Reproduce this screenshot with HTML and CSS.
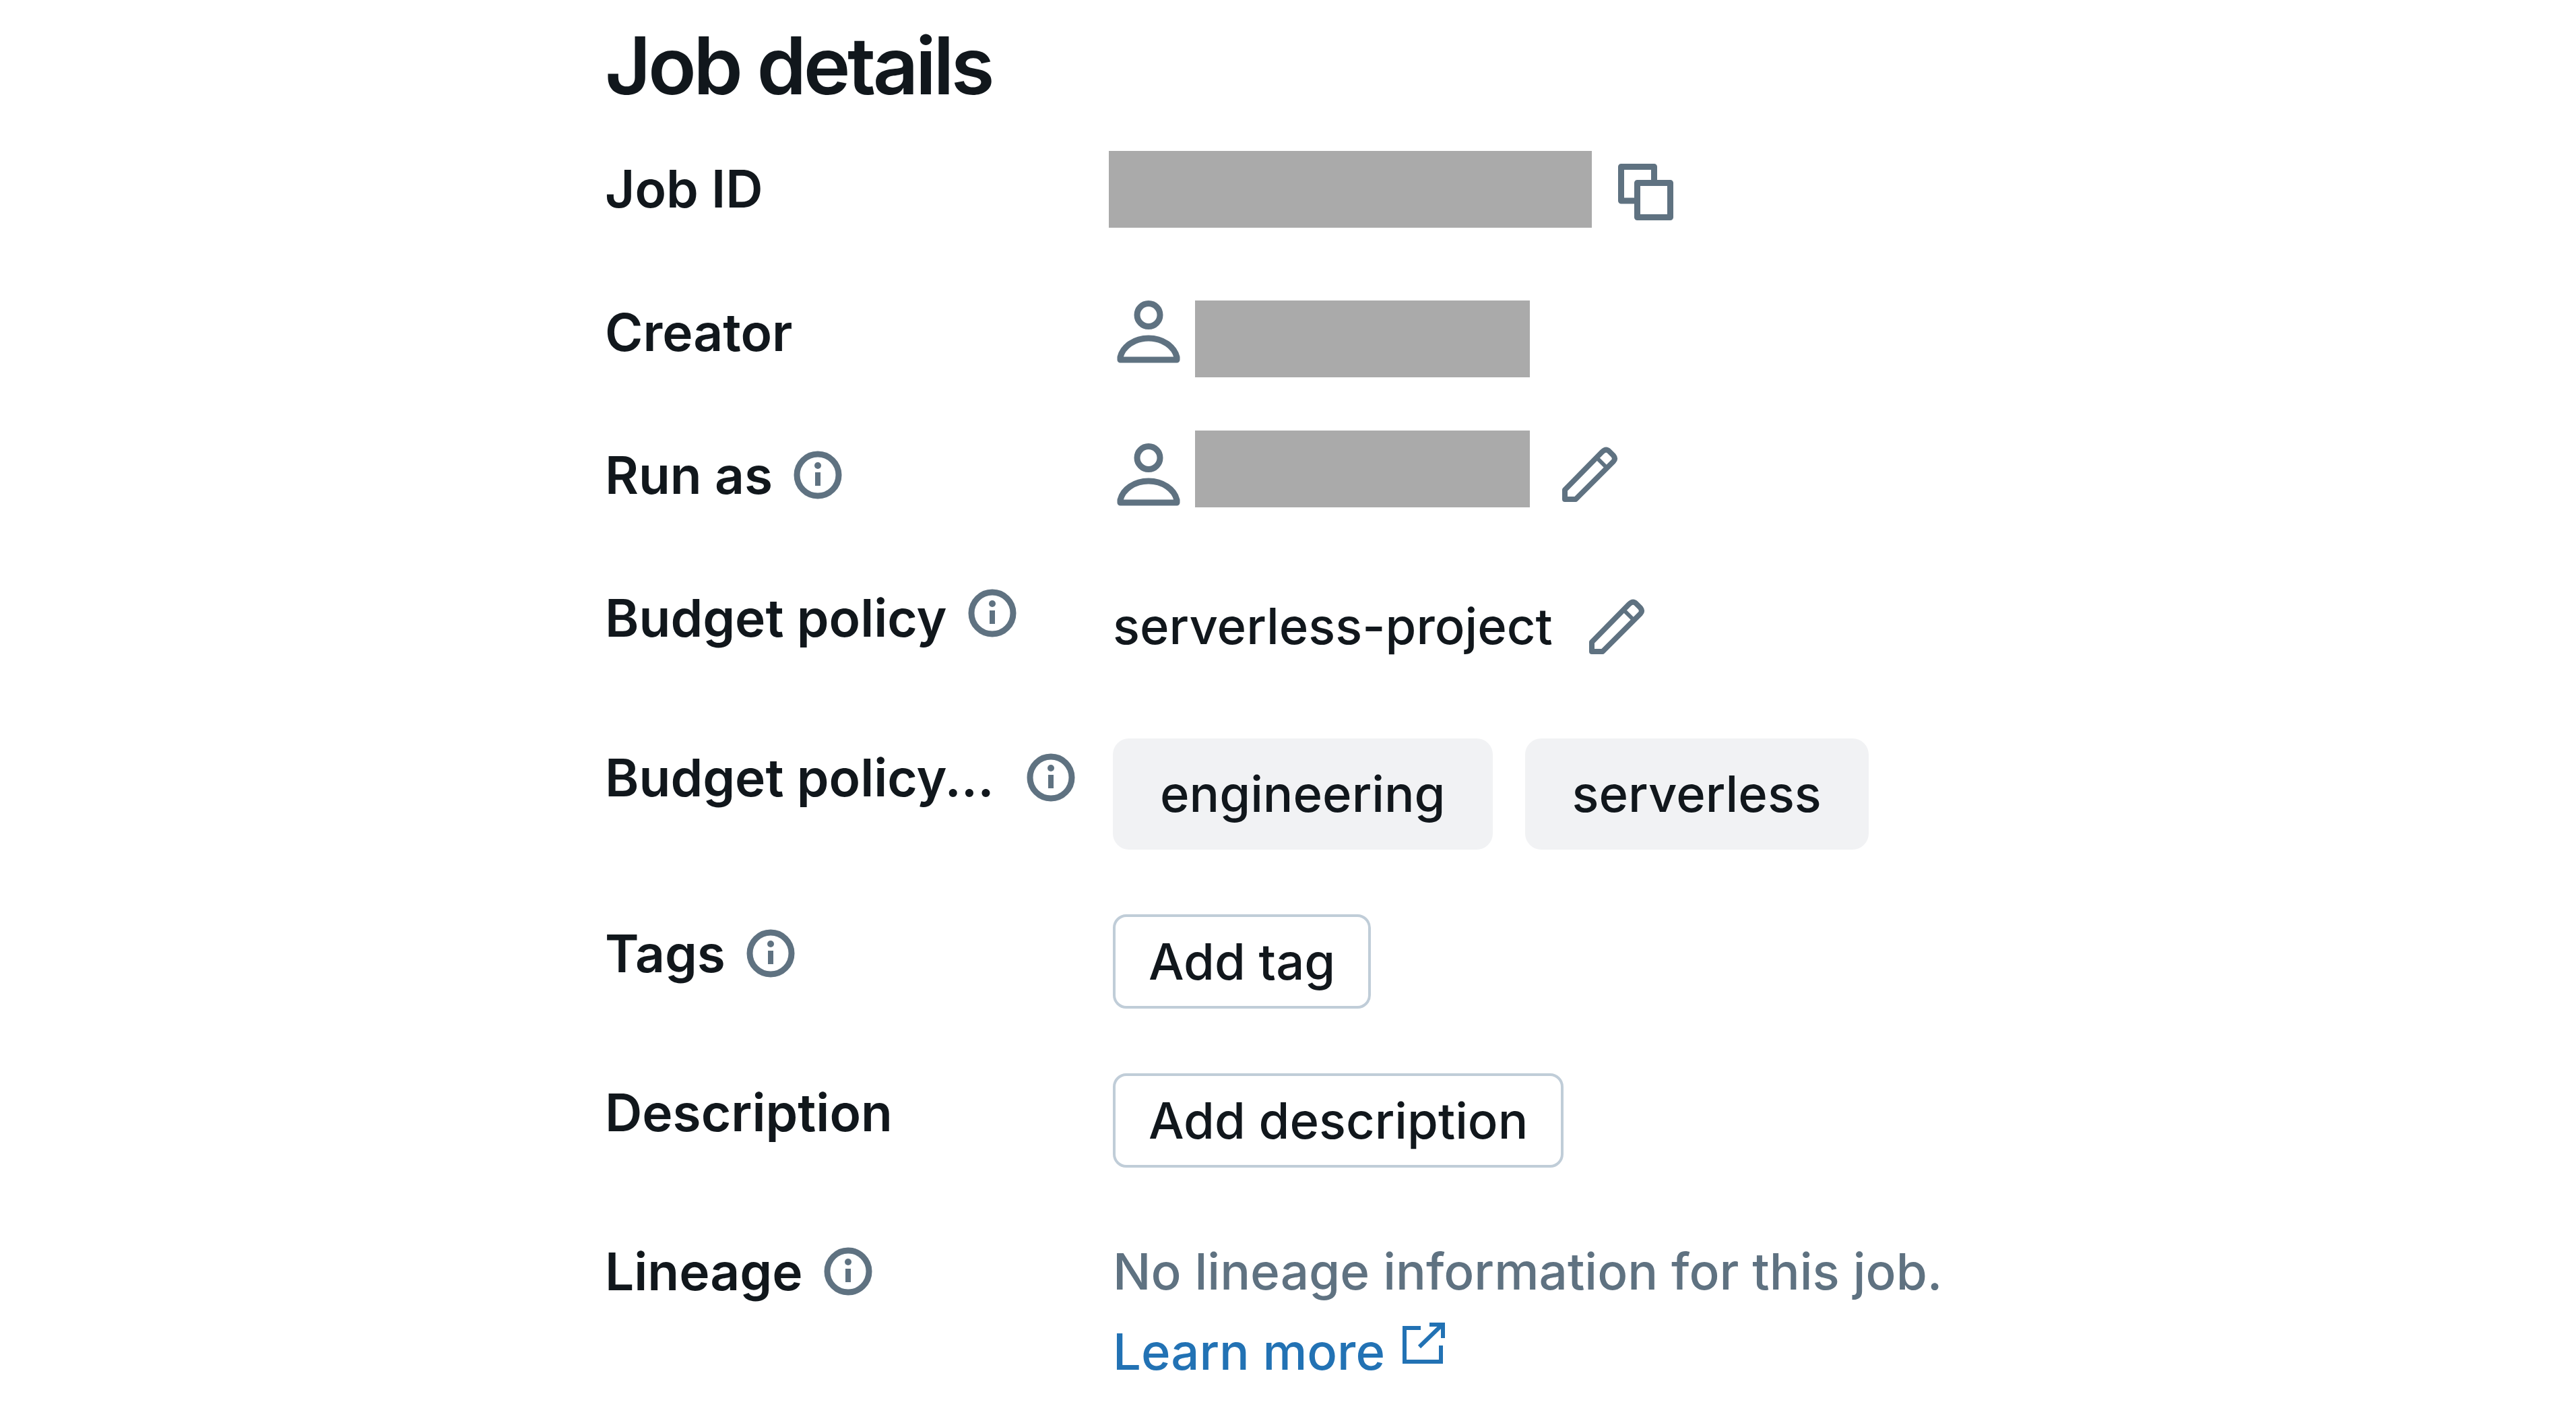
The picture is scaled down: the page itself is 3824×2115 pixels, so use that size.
FILE: index.html
```html
<!DOCTYPE html>
<html lang="en">
<head>
    <meta charset="UTF-8">
    <title>Job details</title>
    <link rel="stylesheet" href="styles.css">
</head>
<body>
    <svg class="defs" width="0" height="0">
        <symbol id="info" viewBox="0 0 72 72">
            <circle cx="36" cy="36" r="31" fill="none" stroke="currentColor" stroke-width="9"/>
            <circle cx="36" cy="22" r="5" fill="currentColor"/>
            <path d="M36 32V52" fill="none" stroke="currentColor" stroke-width="8"/>
        </symbol>
        <symbol id="person" viewBox="0 0 94 93">
            <circle cx="47" cy="21.5" r="17" fill="none" stroke="currentColor" stroke-width="9"/>
            <path d="M5 88V84C9 68 26 56 47 56C68 56 85 68 89 84V88Z" fill="none" stroke="currentColor" stroke-width="9" stroke-linejoin="round"/>
        </symbol>
        <symbol id="pencil" viewBox="0 0 84 84">
            <path d="M5 79V65L60 9Q66 3 71 8L77 14Q81 19 77 23L21 79Z" fill="none" stroke="currentColor" stroke-width="8" stroke-linejoin="round"/>
            <path d="M52 17L67 32" fill="none" stroke="currentColor" stroke-width="6"/>
        </symbol>
        <symbol id="copy" viewBox="0 0 82 84">
            <path d="M24 55H4.500V4.500H53.500V24" fill="none" stroke="currentColor" stroke-width="9" stroke-linejoin="round"/>
            <rect x="28.500" y="28.500" width="49" height="51" fill="none" stroke="currentColor" stroke-width="9" stroke-linejoin="round"/>
        </symbol>
        <symbol id="external" viewBox="0 0 64 62">
            <path d="M28 8H4V58H58V34" fill="none" stroke="currentColor" stroke-width="6"/>
            <path d="M26 36L59 4M41 3H61V23" fill="none" stroke="currentColor" stroke-width="6"/>
        </symbol>
    </svg>

    <div class="details">
        <h1>Job details</h1>

        <div class="row row-id">
            <div class="label">Job ID</div>
            <div class="value">
                <div class="redacted redacted-wide"></div>
                <svg class="icon icon-copy"><use href="#copy"/></svg>
            </div>
        </div>

        <div class="row row-person">
            <div class="label">Creator</div>
            <div class="value value-creator">
                <svg class="icon icon-person"><use href="#person"/></svg>
                <div class="redacted"></div>
            </div>
        </div>

        <div class="row row-person">
            <div class="label">Run as <svg class="icon icon-info"><use href="#info"/></svg></div>
            <div class="value value-runas">
                <svg class="icon icon-person"><use href="#person"/></svg>
                <div class="redacted"></div>
                <svg class="icon icon-pencil icon-pencil-raised"><use href="#pencil"/></svg>
            </div>
        </div>

        <div class="row">
            <div class="label">Budget policy <svg class="icon icon-info icon-info-raised"><use href="#info"/></svg></div>
            <div class="value value-text">
                <span>serverless-project</span>
                <svg class="icon icon-pencil icon-pencil-text"><use href="#pencil"/></svg>
            </div>
        </div>

        <div class="row">
            <div class="label label-chips">Budget policy... <svg class="icon icon-info icon-info-wide"><use href="#info"/></svg></div>
            <div class="value chips">
                <span class="chip">engineering</span>
                <span class="chip">serverless</span>
            </div>
        </div>

        <div class="row">
            <div class="label">Tags <svg class="icon icon-info"><use href="#info"/></svg></div>
            <div class="value"><button class="btn">Add tag</button></div>
        </div>

        <div class="row">
            <div class="label">Description</div>
            <div class="value"><button class="btn">Add description</button></div>
        </div>

        <div class="row row-last">
            <div class="label">Lineage <svg class="icon icon-info"><use href="#info"/></svg></div>
            <div class="lineage">
                <div class="muted">No lineage information for this job.</div>
                <a class="link" href="#">Learn more <svg class="icon icon-external"><use href="#external"/></svg></a>
            </div>
        </div>
    </div>
</body>
</html>
```

FILE: styles.css
```css
* {
    box-sizing: border-box;
}
body {
    margin: 0;
    background: #fff;
    color: #11171c;
    font-family: Inter, "Liberation Sans", sans-serif;
    font-size: 74.2px;
    font-weight: 450;
    overflow: hidden;
}
.defs {
    display: block;
    height: 0;
}
.details {
    padding: 27px 0 0 898px;
}
h1 {
    margin: 0 0 55px;
    font-size: 118px;
    line-height: 140px;
    font-weight: 600;
    letter-spacing: -4.5px;
}
.row {
    display: flex;
    align-items: flex-start;
    margin-bottom: 96px;
}
.row-last {
    margin-bottom: 0;
}
.row-id {
    height: 117px;
}
.row-person {
    height: 116px;
}
.label {
    flex: 0 0 754px;
    display: flex;
    align-items: center;
    gap: 12px;
    height: 116px;
    line-height: 116px;
    font-size: 76.6px;
    font-weight: 560;
    white-space: pre;
}
.value {
    display: flex;
    align-items: flex-start;
}
.icon {
    display: block;
    flex: none;
    color: #5f7281;
}
.icon-info {
    width: 72px;
    height: 72px;
}
.icon-info-raised {
    margin-top: -14px;
}
.icon-info-wide {
    margin-left: 19px;
}
.icon-person {
    width: 94px;
    height: 93px;
}
.icon-pencil {
    width: 84px;
    height: 84px;
}
.icon-copy {
    width: 82px;
    height: 84px;
    margin: 21px 0 0 39px;
}
.icon-external {
    width: 64px;
    height: 62px;
    color: inherit;
}
.redacted {
    width: 497px;
    height: 114px;
    background: #aaa;
}
.redacted-wide {
    width: 717px;
    margin: 2px 0 0 -6px;
}
.value-creator {
    gap: 22px;
    padding-left: 6px;
    margin-top: 11px;
}
.value-runas {
    gap: 22px;
    padding-left: 6px;
    margin-top: -8px;
}
.value-runas .icon-person {
    margin-top: 19px;
}
.icon-pencil-raised {
    margin: 23px 0 0 25px;
}
.value-text {
    align-items: center;
    height: 141px;
    line-height: 141px;
    gap: 53px;
}
.chips {
    gap: 48px;
}
.chip {
    display: block;
    height: 165px;
    line-height: 165px;
    padding: 0 70px;
    border-radius: 24px;
    background: #f1f2f4;
}
.btn {
    display: block;
    height: 140px;
    padding: 0 49px;
    border: 4px solid #c0cdd8;
    border-radius: 20px;
    background: #fff;
    color: inherit;
    font: inherit;
}
.lineage {
    line-height: 116px;
}
.muted {
    color: #5f7281;
    font-size: 74.7px;
}
.link {
    display: flex;
    gap: 25px;
    align-items: center;
    margin-top: 3px;
    color: #2272b4;
    text-decoration: none;
}
.link .icon {
    margin-top: -24px;
}
```
